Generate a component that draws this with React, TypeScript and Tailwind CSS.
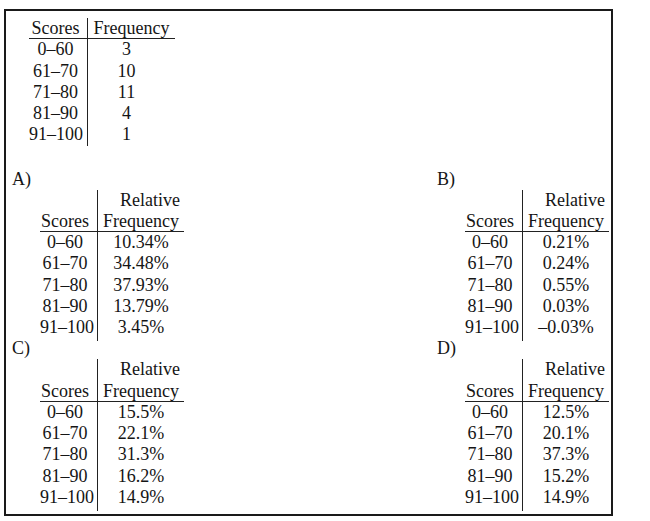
const top = [
  ["0–60", "3"],
  ["61–70", "10"],
  ["71–80", "11"],
  ["81–90", "4"],
  ["91–100", "1"],
];

const options: { label: string; values: string[] }[] = [
  { label: "A)", values: ["10.34%", "34.48%", "37.93%", "13.79%", "3.45%"] },
  { label: "B)", values: ["0.21%", "0.24%", "0.55%", "0.03%", "–0.03%"] },
  { label: "C)", values: ["15.5%", "22.1%", "31.3%", "16.2%", "14.9%"] },
  { label: "D)", values: ["12.5%", "20.1%", "37.3%", "15.2%", "14.9%"] },
];

const ranges = ["0–60", "61–70", "71–80", "81–90", "91–100"];

function FrequencyTable() {
  return (
    <div className="grid grid-cols-[58px_88px] auto-rows-[21.25px] whitespace-nowrap">
      <div className="border-b border-[#222] pr-[5px] text-center">Scores</div>
      <div className="border-b border-l border-[#222] text-center">Frequency</div>
      {top.map(([range, count]) => (
        <div key={range} className="contents">
          <div className="pr-[5px] text-center">{range}</div>
          <div className="border-l border-[#222] pr-[10px] text-center">{count}</div>
        </div>
      ))}
    </div>
  );
}

function Option({ label, values }: { label: string; values: string[] }) {
  return (
    <div className="whitespace-nowrap">
      <div className="h-[21px]">{label}</div>
      <div className="ml-[28px] grid grid-cols-[57px_87px] auto-rows-[21.25px]">
        <div className="pr-[7px]" />
        <div className="border-l border-[#222] pr-[4px] text-right">Relative</div>
        <div className="border-b border-[#222] pr-[7px] text-center">Scores</div>
        <div className="border-b border-l border-[#222] text-center">Frequency</div>
        {ranges.map((range, i) => (
          <div key={range} className="contents">
            <div className="pr-[7px] text-center">{range}</div>
            <div
              className={
                i === ranges.length - 1
                  ? "h-[23.75px] border-l border-[#222] text-center"
                  : "border-l border-[#222] text-center"
              }
            >
              {values[i]}
            </div>
          </div>
        ))}
      </div>
    </div>
  );
}

export default function App() {
  return (
    <div className="min-h-[521px] w-[650px] bg-white pt-[9px] pl-[4px] font-['Liberation_Serif',serif] text-[18px] leading-[21.25px] text-[#151515]">
      <div className="h-[507px] w-[609px] overflow-hidden border-2 border-[#1a1a1a]">
        <div className="pt-[7px] pl-[23px]">
          <FrequencyTable />
        </div>
        <div className="mt-[23px] grid grid-cols-[425px_1fr] pl-[6px]">
          {options.map((o) => (
            <Option key={o.label} label={o.label} values={o.values} />
          ))}
        </div>
      </div>
    </div>
  );
}
